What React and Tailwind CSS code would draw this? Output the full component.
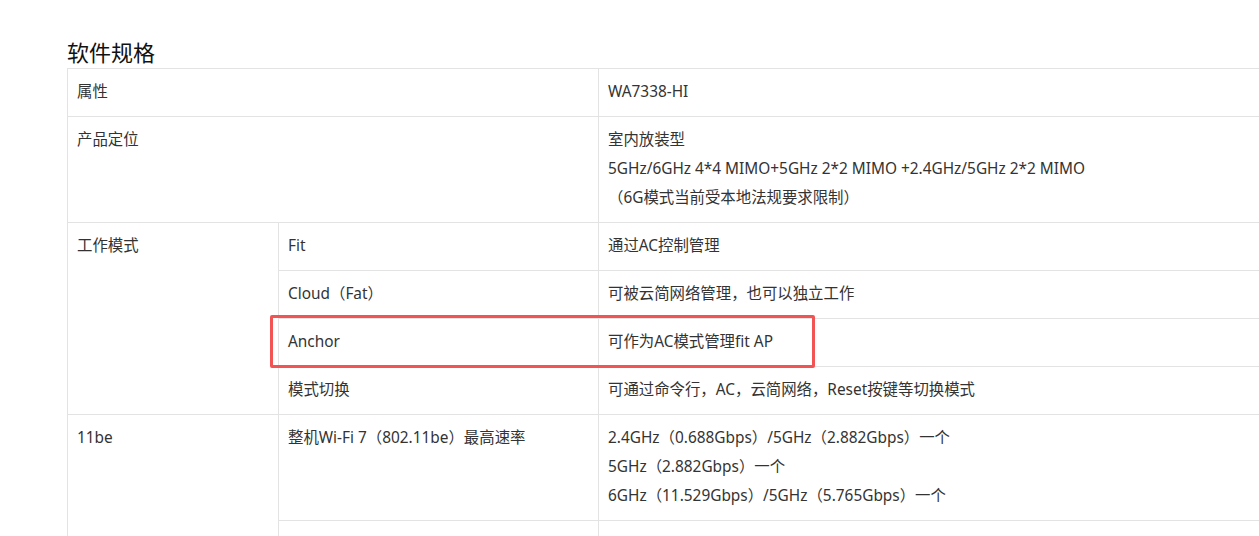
import React from 'react';

const cell = 'border border-[#e3e3e3] pl-[9px] pr-[10px] pt-[8px] pb-[10px] align-top';

function Lines({ items }) {
  return (
    <>
      {items.map((t, i) => (
        <div key={i}>{t}</div>
      ))}
    </>
  );
}

export default function App() {
  return (
    <div
      className="w-[1259px] h-[536px] overflow-hidden bg-white text-[#333] text-[15.4px] leading-[29px]"
      style={{ fontFamily: '"Noto Sans", "Noto Sans CJK SC", sans-serif' }}
    >
      <div className="pl-[67px] pt-[37px]">
        <h2 className="text-[22px] leading-[31px] text-[#111]">软件规格</h2>
        <div className="relative">
          <table className="table-fixed border-collapse w-[1320px]">
            <colgroup>
              <col className="w-[211px]" />
              <col className="w-[320px]" />
              <col />
            </colgroup>
            <tbody>
              <tr>
                <td className={cell} colSpan={2}>属性</td>
                <td className={cell}>WA7338-HI</td>
              </tr>
              <tr>
                <td className={cell} colSpan={2}>产品定位</td>
                <td className={cell}>
                  <Lines
                    items={[
                      '室内放装型',
                      '5GHz/6GHz 4*4 MIMO+5GHz 2*2 MIMO +2.4GHz/5GHz 2*2 MIMO',
                      '（6G模式当前受本地法规要求限制）',
                    ]}
                  />
                </td>
              </tr>
              <tr>
                <td className={cell} rowSpan={4}>工作模式</td>
                <td className={cell}>Fit</td>
                <td className={cell}>通过AC控制管理</td>
              </tr>
              <tr>
                <td className={cell}>Cloud（Fat）</td>
                <td className={cell}>可被云简网络管理，也可以独立工作</td>
              </tr>
              <tr>
                <td className={cell}>Anchor</td>
                <td className={cell}>可作为AC模式管理fit AP</td>
              </tr>
              <tr>
                <td className={cell}>模式切换</td>
                <td className={cell}>可通过命令行，AC，云简网络，Reset按键等切换模式</td>
              </tr>
              <tr>
                <td className={cell} rowSpan={2}>11be</td>
                <td className={cell}>整机Wi-Fi 7（802.11be）最高速率</td>
                <td className={cell}>
                  <Lines
                    items={[
                      '2.4GHz（0.688Gbps）/5GHz（2.882Gbps）一个',
                      '5GHz（2.882Gbps）一个',
                      '6GHz（11.529Gbps）/5GHz（5.765Gbps）一个',
                    ]}
                  />
                </td>
              </tr>
              <tr>
                <td className={cell}>&nbsp;</td>
                <td className={cell}>&nbsp;</td>
              </tr>
            </tbody>
          </table>
          <div className="absolute left-[203px] top-[247px] w-[545px] h-[53px] border-[3px] border-[#f25353] rounded-[2px] pointer-events-none" />
        </div>
      </div>
    </div>
  );
}
